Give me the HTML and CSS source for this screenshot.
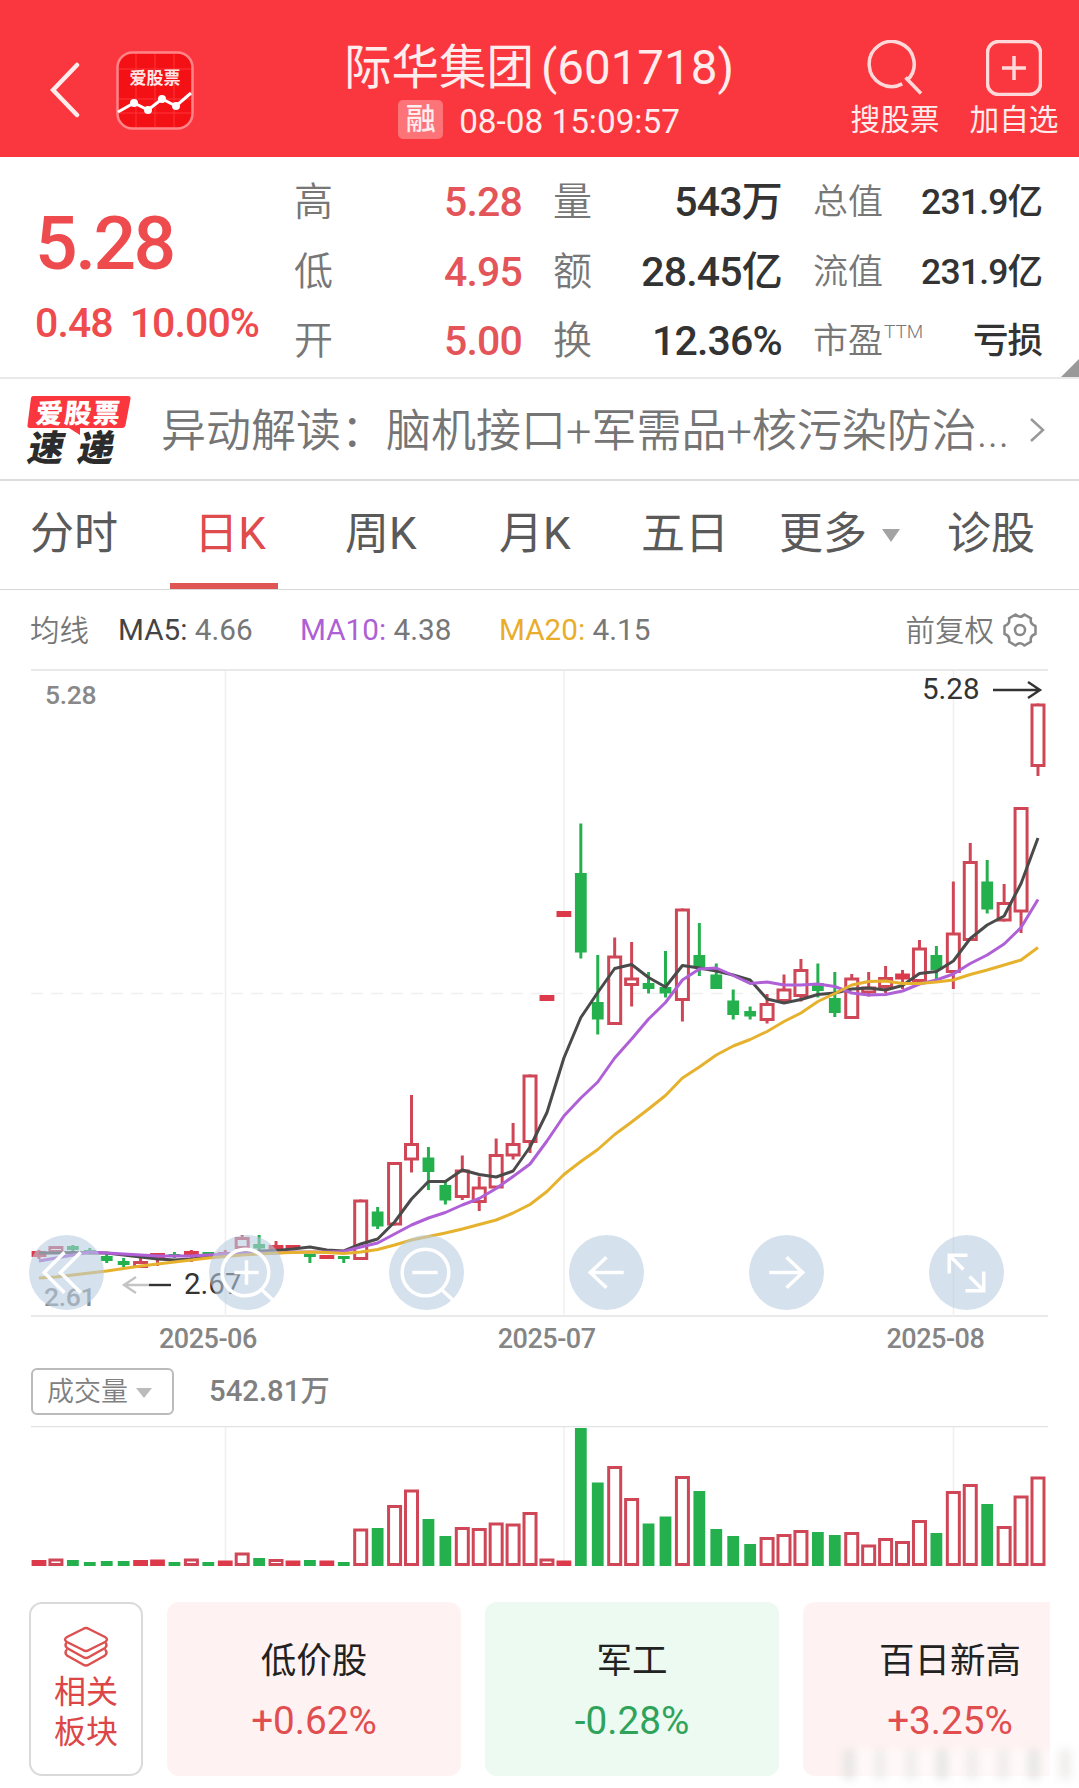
FILE: index.html
```html
<!DOCTYPE html>
<html lang="zh-CN">
<head>
<meta charset="utf-8">
<title>际华集团(601718)</title>
<link rel="stylesheet" href="styles.css">
</head>
<body>
<header class="topbar">
  <div class="topbar-left">
    <svg class="back" width="30" height="56" viewBox="0 0 30 56"><path d="M27 3 3 28l24 25"/></svg>
    <svg class="app-logo" width="78" height="79" viewBox="0 0 78 79">
      <rect class="logo-bg" x="1.5" y="1.5" width="75" height="76" rx="15"/>
      <path class="logo-grid" d="M20 3v73M39 3v73M58 3v73M3 18h72M3 48h72M3 62h72"/>
      <text x="39" y="32.500">爱股票</text>
      <path class="logo-line" d="M2 61 18 52 32 59 46 48 60 55 75 42"/>
      <g class="logo-dots"><circle cx="18" cy="52" r="4"/><circle cx="32" cy="59" r="4"/><circle cx="46" cy="48" r="4"/><circle cx="60" cy="55" r="4"/></g>
    </svg>
  </div>
  <div class="title-block">
    <h1>际华集团<span>(601718)</span></h1>
    <div class="subtitle"><span class="badge">融</span><time>08-08 15:09:57</time></div>
  </div>
  <nav class="actions">
    <div class="action">
      <svg width="58" height="56" viewBox="0 0 58 56"><path d="M36.200 43.900A22.500 22.500 0 1 1 41.500 40M39.500 37.500 55 53.500"/></svg>
      <span>搜股票</span>
    </div>
    <div class="action">
      <svg width="56" height="56" viewBox="0 0 56 56"><rect x="1.500" y="1.500" width="53" height="53" rx="11"/><path d="M28 16v24M16 28h24"/></svg>
      <span>加自选</span>
    </div>
  </nav>
</header>

<section class="quote">
  <div class="price-block">
    <strong>5.28</strong>
    <div class="change"><span>0.48</span><span>10.00%</span></div>
  </div>
  <dl class="stats col-a">
    <dt>高</dt><dd class="up">5.28</dd>
    <dt>低</dt><dd class="up">4.95</dd>
    <dt>开</dt><dd class="up">5.00</dd>
  </dl>
  <dl class="stats col-b">
    <dt>量</dt><dd>543万</dd>
    <dt>额</dt><dd>28.45亿</dd>
    <dt>换</dt><dd>12.36%</dd>
  </dl>
  <dl class="stats col-c">
    <dt>总值</dt><dd>231.9亿</dd>
    <dt>流值</dt><dd>231.9亿</dd>
    <dt>市盈<sup>TTM</sup></dt><dd>亏损</dd>
  </dl>
  <i class="corner"></i>
</section>

<section class="news">
  <svg class="news-logo" width="106" height="74" viewBox="0 -2 106 74">
    <path class="bubble" d="M7 1h95q3 0 2.500 3l-5 26q-.5 3-3.500 3H54v7l-11-7H4q-3 0-2.500-3L5 3q.5-2 2-2z"/>
    <text class="bubble-text" x="9" y="28" textLength="84" transform="skewX(-6) translate(3 0)">爱股票</text>
    <text class="bubble-sub" x="9" y="66" transform="skewX(-12) translate(5 0)">速</text>
    <text class="bubble-sub" x="59" y="66" transform="skewX(-12) translate(5 0)">递</text>
  </svg>
  <p>异动解读：脑机接口+军需品+核污染防治...</p>
  <svg class="chevron" width="18" height="28" viewBox="0 0 18 28"><path d="M3 3l12 11L3 25"/></svg>
</section>

<nav class="tabs">
  <span>分时</span><span class="active">日K</span><span>周K</span><span>月K</span><span>五日</span><span class="more">更多<i class="tri"></i></span><span>诊股</span>
</nav>

<section class="ma-row">
  <span class="ma-title">均线</span>
  <span class="ma ma5"><b>MA5:</b> 4.66</span>
  <span class="ma ma10"><b>MA10:</b> 4.38</span>
  <span class="ma ma20"><b>MA20:</b> 4.15</span>
  <span class="adjust"><span>前复权</span>
    <svg width="34" height="34" viewBox="-17 -17 34 34"><path d="M-4.500-15.500Q0-11 4.500-15.500L11-11.700Q9.500-6 15.500-4V4Q9.500 6 11 11.700L4.500 15.500Q0 11-4.500 15.500L-11 11.700Q-9.500 6-15.500 4V-4Q-9.500-6-11-11.700Z"/><circle r="5"/></svg>
  </span>
</section>

<section class="kline">
  <svg id="kline" width="1079" height="648" viewBox="0 668 1079 648"></svg>
  <div class="controls">
    <button><svg viewBox="-37 -37 74 74"><path d="M-2-20-22 0-2 20M14-20-6 0 14 20"/></svg></button>
    <button><svg viewBox="-37 -37 74 74"><circle cx="-1" r="23"/><path d="M15 17 28 29M-12 0h24M0-12v24"/></svg></button>
    <button><svg viewBox="-37 -37 74 74"><circle cx="-1" r="23"/><path d="M15 17 27 28M-14 0h25"/></svg></button>
    <button><svg viewBox="-37 -37 74 74"><path d="M17 0H-16M0-15-16 0 0 15"/></svg></button>
    <button><svg viewBox="-37 -37 74 74"><path d="M-17 0H16M0-15 16 0 0 15"/></svg></button>
    <button><svg viewBox="-37 -37 74 74"><path d="M1-17H-17V1M-17-17-3-3M-1 18H17V-1M17 18 3 4"/></svg></button>
  </div>
</section>

<div class="dates"><span>2025-06</span><span>2025-07</span><span>2025-08</span></div>

<div class="vol-head">
  <div class="select">成交量<i class="tri"></i></div>
  <span>542.81万</span>
</div>
<svg id="volume" width="1079" height="141" viewBox="0 1425 1079 141"></svg>

<section class="sectors">
  <div class="related">
    <svg width="46" height="44" viewBox="0 0 46 44"><path d="M20 3q3-2 6 0l16 8q4 2.500 0 5L26 24q-3 2-6 0L4 16q-4-2.500 0-5z"/><path d="M4 16q-3 3 0 6l16 9q3 2 6 0l16-9q3-3 0-6M4 23.500q-3 3 0 6l16 9q3 2 6 0l16-9q3-3 0-6"/></svg>
    <span>相关</span><span>板块</span>
  </div>
  <div class="cards">
    <article class="card rise"><h2>低价股</h2><p>+0.62%</p></article>
    <article class="card fall"><h2>军工</h2><p>-0.28%</p></article>
    <article class="card rise"><h2>百日新高</h2><p>+3.25%</p></article>
  </div>
  <div class="haze"><i></i><i></i><i></i><i></i><i></i><i></i><i></i><i></i></div>
</section>
<script src="chart.js"></script>
</body>
</html>
```
FILE: styles.css
```css
* { box-sizing: border-box; }
body {
  margin: 0;
  width: 1079px;
  height: 1788px;
  overflow: hidden;
  background: #fff;
  color: #333;
  font-family: Roboto, "Noto Sans CJK SC", sans-serif;
}
h1, h2, p, dl, dt, dd { margin: 0; font-weight: 400; }
svg { display: block; flex: none; }

.topbar {
  height: 157px;
  background: #fa373e;
  color: #ffecec;
  display: grid;
  grid-template-columns: 340px 398px 1fr;
}
.topbar-left { display: flex; align-items: flex-start; padding: 51px 0 0 50px; gap: 36px; }
.back { margin-top: 11px; fill: none; stroke: #ffecec; stroke-width: 4.500; stroke-linecap: round; }
.logo-bg { fill: #f31116; stroke: #ff8589; stroke-width: 2.500; }
.logo-grid { stroke: #ff3438; stroke-width: 1; }
.app-logo text { fill: #ffe6e6; font-size: 17px; font-weight: 700; text-anchor: middle; }
.logo-line { fill: none; stroke: #fff; stroke-width: 3; }
.logo-dots { fill: #fff; }
.title-block { padding-top: 37px; }
h1 { font-size: 47.500px; line-height: 62px; text-align: center; white-space: nowrap; }
h1 span { margin-left: 7px; }
.subtitle { display: flex; justify-content: center; align-items: center; gap: 16px; height: 39px; margin-top: 1px; }
.badge { width: 45px; height: 39px; border-radius: 5px; background: #fc7478; font-size: 30px; font-weight: 500; line-height: 38px; text-align: center; }
time { font-size: 33.300px; line-height: 44px; padding-top: 5px; }
.actions { display: flex; gap: 29px; padding: 40px 0 0 112px; }
.action { display: flex; flex-direction: column; align-items: center; width: 90px; font-size: 29.700px; line-height: 40px; }
.action svg { fill: none; stroke: #ffd9da; stroke-width: 3.500; }
.action span { margin-top: 4px; white-space: nowrap; }

.quote {
  position: relative;
  height: 222px;
  border-bottom: 2px solid #e9e9e9;
  display: flex;
}
.price-block { width: 294px; padding: 44px 0 0 35px; color: #ee4b4e; font-weight: 500; }
.price-block strong { display: block; font-size: 75px; line-height: 84px; font-weight: 500; letter-spacing: -2.500px; }
.change { display: flex; gap: 17px; margin-top: 13px; font-size: 41px; line-height: 50px; letter-spacing: -.9px; }
.stats { display: grid; grid-template-rows: repeat(3, 69.500px); padding-top: 11px; height: 220px; align-items: center; font-size: 41px; line-height: 69px; white-space: nowrap; }
.stats dt { color: #777; font-size: 39px; font-weight: 350; }
.stats dd { text-align: right; font-weight: 500; letter-spacing: -.8px; }
.stats .up { color: #e4555a; }
.col-a { width: 228px; grid-template-columns: 50px 1fr; }
.col-b { width: 229px; margin-left: 31px; grid-template-columns: 50px 1fr; }
.col-c { width: 227px; margin-left: 31px; grid-template-columns: 108px 1fr; font-size: 35.500px; }
.col-c dt { font-size: 35px; }
.stats sup { font-size: 19px; line-height: 0; vertical-align: 15px; margin-left: 1px; }
.corner { position: absolute; right: 0; bottom: 0; border: 9px solid; border-color: transparent #999 #999 transparent; }

.news { height: 102px; border-bottom: 2px solid #dcdcdc; display: flex; align-items: center; padding: 2px 33px 0 26px; }
.bubble { fill: #fa373e; }
.news-logo { overflow: visible; }
.news-logo text { font-weight: 900; }
.bubble-text { fill: #fff; font-size: 27px; }
.bubble-sub { fill: #2c2c2c; font-size: 36px; }
.news p { margin-left: 29px; padding-top: 3px; flex: 1; font-size: 45px; line-height: 60px; font-weight: 350; color: #757575; white-space: nowrap; }
.chevron { fill: none; stroke: #999; stroke-width: 2.500; }

.tabs {
  height: 109px;
  border-bottom: 1px solid #d8d8d8;
  display: grid;
  grid-template-columns: 140px 148px 174px 149px 138px 168px 1fr;
  padding-left: 30px;
  font-size: 44px;
  line-height: 106px;
  color: #5a5a5a;
}
.tabs > :nth-child(3) { padding-left: 27px; }
.tabs > :nth-child(4) { padding-left: 7px; }
.active { width: 108px; height: 108px; border-bottom: 6px solid #e05454; color: #e04b4b; text-align: center; padding-left: 12px; }
.tri { display: inline-block; border: 9px solid transparent; border-top: 13px solid #a3a3a3; border-bottom: 0; }
.more .tri { margin-left: 15px; vertical-align: 7px; }

.ma-row { height: 79px; display: flex; align-items: center; padding: 0 42px 0 30px; font-size: 29.700px; color: #777; }
.ma-title, .adjust { font-weight: 350; font-size: 29.500px; }
.ma-title, .adjust span { margin-top: -3px; }
.ma b { font-weight: 400; }
.ma5 { margin-left: 29px; width: 182px; }
.ma10 { width: 199px; }
.ma5 b { color: #444; }
.ma10 b { color: #ad60d6; }
.ma20 b { color: #e9ad2b; }
.adjust { margin-left: auto; display: flex; align-items: center; gap: 9px; }
.adjust svg { fill: none; stroke: #888; stroke-width: 2.500; stroke-linejoin: round; }

.kline { position: relative; height: 648px; }
.controls { position: absolute; left: 29px; right: 75px; bottom: 7px; display: flex; justify-content: space-between; }
.controls button { width: 75px; height: 75px; padding: 0; border: 0; border-radius: 50%; background: rgba(182, 203, 224, .58); }
.controls svg { width: 75px; height: 75px; fill: none; stroke: #fff; stroke-width: 3.500; }

.grid { stroke: #e2e2e2; stroke-width: 1.300; }
.month { stroke: #efefef; stroke-width: 1.500; }
.mid { stroke: #f0f0f0; stroke-width: 1.500; stroke-dasharray: 12 8; }
.rise-body { fill: #fff; stroke: #cf4656; stroke-width: 3; }
.rise-flat { fill: #dc3a4a; }
.rise-wick { stroke: #cf4656; stroke-width: 3; }
.fall-body { fill: #25b04e; }
.fall-wick { stroke: #25b04e; stroke-width: 3; }
.line { fill: none; stroke-width: 3; stroke-linejoin: round; }
.line5 { stroke: #4a4a4a; }
.line10 { stroke: #b060d6; }
.line20 { stroke: #e6b22e; }
.scale { fill: #888; font-size: 26.500px; font-weight: 500; letter-spacing: -.3px; }
.mark { fill: #333; font-size: 29.500px; }
.arrow { fill: none; stroke: #333; stroke-width: 2.400; }
.arrow-faint { fill: none; stroke: #c4c4c4; stroke-width: 2.400; }

.dates { display: flex; height: 51px; padding: 7px 0 0 159px; font-size: 27px; line-height: 31px; font-weight: 500; color: #858585; letter-spacing: -.5px; }
.dates span { width: 98px; margin-right: 241px; white-space: nowrap; }
.dates span:nth-child(2) { margin-right: 291px; }
.vol-head { display: flex; height: 58px; padding-left: 31px; font-size: 29.300px; font-weight: 500; color: #808080; }
.vol-head > span { margin-left: 35px; line-height: 46px; }
.select { width: 143px; height: 47px; border: 2px solid #bbb; border-radius: 6px; padding-left: 14px; font-size: 27px; font-weight: 350; line-height: 45px; white-space: nowrap; }
.select .tri { border-width: 10px 8px 0; border-top-color: #bbb; margin-left: 8px; vertical-align: 3px; }

.sectors { position: relative; display: flex; gap: 24px; padding: 35px 29px 0; }
.related { width: 114px; height: 174px; flex: none; border: 2px solid #dadada; border-radius: 13px; display: flex; flex-direction: column; align-items: center; padding-top: 22px; font-size: 32px; line-height: 40px; color: #dc4646; }
.related svg { fill: none; stroke: #dc5050; stroke-width: 2.400; margin-bottom: 2px; }
.cards { flex: 1; display: flex; gap: 24px; overflow: hidden; }
.card { flex: 0 0 294px; height: 174px; border-radius: 12px; text-align: center; padding-top: 33px; }
.card h2 { font-size: 35.500px; line-height: 52px; color: #222; }
.card p { font-size: 38.700px; line-height: 46px; margin-top: 11px; }
.rise { background: #fff2f2; }
.rise p { color: #e04e50; }
.fall { background: #ecfaf1; }
.fall p { color: #2fa35a; }
.haze { position: absolute; left: 843px; top: 182px; width: 228px; height: 30px; display: flex; justify-content: space-between; background: rgba(255, 255, 255, .55); filter: blur(4px); }
.haze i { width: 12px; background: #f1eded; }
.haze i:nth-child(3n + 1) { background: #e9e6e6; }
```
FILE: chart.js
```js
// One row per session: direction, body top, body bottom, wick top, wick bottom, volume bar top
const sessions = [
  ['r',1250,1256,1249,1258,1559],['r',1245,1252,1245,1252,1557.5],['g',1245,1249,1244,1251,1559],['g',1249,1252,1247,1253,1561],
  ['g',1255,1260,1253,1262,1560],['g',1260,1264,1257,1266,1560],['r',1260,1267,1257,1267,1559],['r',1252,1258,1252,1265,1558.5],
  ['g',1253,1256,1251,1257,1561],['r',1250,1256,1249,1261,1557.5],['g',1251,1254,1251,1254,1561],['r',1251,1255,1249,1256,1559.5],
  ['r',1236,1248,1234,1248,1551.5],['g',1243,1247.5,1234,1250,1557],['r',1244,1249,1240,1251,1558],['r',1244,1248,1244,1248,1559.5],
  ['g',1253,1256,1253,1262,1559],['r',1254,1258,1254,1258,1559.5],['g',1255,1258,1255,1262,1561],['r',1198.5,1259,1198.5,1259,1527.5],
  ['g',1210.5,1225.5,1206,1228,1527],['r',1161,1224.5,1161,1224.5,1504],['r',1142,1159.5,1094,1171.5,1488.5],['g',1156.5,1171,1146,1189,1518],
  ['g',1184,1199.5,1181,1203.5,1535],['r',1168.5,1197,1154.5,1199,1526],['r',1185.5,1202,1175.5,1210,1527],['r',1153,1187.5,1137.5,1187.5,1521.5],
  ['r',1142,1155.5,1122,1158.5,1522.5],['r',1073.5,1142,1073.5,1152,1511],['r',994,1000,994,1000,1557.5],['r',910,916,910,916,1559.5],
  ['g',872,951.5,822.5,957.5,1427],['g',1001,1018.5,954,1033.5,1481.5],['r',954.5,1024,936.5,1024,1465],['r',976.5,985,941,1005.5,1497],
  ['g',982,988,971,992.5,1522.5],['g',986,992.5,950,996.5,1515.5],['r',907.5,1000,907.5,1020.5,1475],['g',954,967,922,975,1490],
  ['g',973.5,988,962.5,988,1528],['g',999.5,1014,988.5,1018.5,1535],['g',1010,1015.5,1005.5,1018.5,1543],['r',1002,1020,993,1022.5,1536],
  ['r',987.5,1001,973.5,1001,1533],['r',968,996,958,1000.5,1529],['g',982,990,962.5,996.5,1531],['g',997,1012,971,1016,1534],
  ['r',976.5,1018,973,1018,1531],['r',985.5,992.5,971,995.5,1543.5],['r',976,987,965,992,1537],['r',972.5,978.5,969,988,1540],
  ['r',946.5,981,939,981,1519],['g',954,969,945,978,1532],['r',931.5,972,880.5,988,1490],['r',860,940,842,940,1483],
  ['g',880.5,908.5,859,912.5,1503],['r',901,920.5,883,920.5,1525],['r',806,911.5,806,932,1494.5],['r',702.5,766,702.5,775,1475.5]
];
const averages = {
  line5: [1252,1252,1251.5,1252,1252,1254,1256,1258,1259,1258,1256,1254,1252,1250,1249.5,1248,1246,1249,1250,1243,1238,1221,1198,1180.5,1180.5,1169,1173.5,1176,1170,1146,1111.5,1057,1016.5,991.5,967.5,963.5,976.5,986,964.5,967,970,974,979,998,1002,998.5,993.5,992,988,987,989,984.5,972.5,970.5,960,937.5,924,915,882.5,837],
  line10: [1260,1257,1254,1251,1252,1253,1254,1255,1255,1255,1254,1253,1252,1252,1252,1251,1251,1251,1250.5,1246,1242,1233,1224,1217,1211.5,1204,1197.5,1187.5,1175.5,1163,1140,1115,1097,1081,1057,1038,1018,1001.5,979,968,967,974.5,982.5,981,984,984,983,985.5,992,994,993.5,990,983,979,973,962.5,954,943,926.5,898.5],
  line20: [1277,1276,1274,1272,1270,1267.5,1265,1263,1261,1259,1257,1255.5,1254,1253,1252,1251.5,1251,1251.5,1252.5,1251,1248.5,1244,1239,1235.5,1232,1228,1223.5,1219,1212,1203.5,1190.5,1173.5,1160.5,1148.5,1133.5,1121,1108,1094.5,1077,1066,1054,1045,1038.5,1030.5,1020.5,1012,1000.5,992.5,984,980.5,980,982.5,982.5,981,979,973.5,969,964,959,946.5]
};
const baseLine = 1565;
const x = i => 39 + i * 16.932;
function bar(dir, i, top, bottom) {
  const h = bottom - top;
  if (dir === 'g') return `<rect class="fall-body" x="${x(i) - 5.9}" y="${top}" width="11.8" height="${h}"/>`;
  // Bodies too thin to hold an outline are drawn solid
  if (h <= 6.5) return `<rect class="rise-flat" x="${x(i) - 7.4}" y="${top}" width="14.8" height="${h}"/>`;
  return `<rect class="rise-body" x="${x(i) - 6}" y="${top + 1.5}" width="12" height="${h - 3}"/>`;
}
const months = (top, bottom) => [225.5, 564, 953.5].map(m => `<path class="month" d="M${m} ${top}V${bottom}"/>`).join('');

let k = '<path class="grid" d="M31 669H1048M31 1315H1048"/>' + months(670, 1315) + '<path class="mid" d="M31 992.5H1040"/>';
k += '<text class="scale" x="45" y="702.500">5.28</text><text class="scale" x="44" y="1305">2.61</text>';
sessions.forEach(([d, top, bottom, hi, lo], i) => {
  k += `<path class="${d === 'r' ? 'rise' : 'fall'}-wick" d="M${x(i)} ${hi}V${lo}"/>` + bar(d, i, top, bottom);
});
for (const name of ['line5', 'line10', 'line20']) {
  k += `<polyline class="line ${name}" points="${averages[name].map((y, i) => x(i) + ',' + y).join(' ')}"/>`;
}
k += '<text class="mark" x="922" y="698">5.28</text><path class="arrow" d="M993 689H1039M1028 681l12 8-12 8"/>';
k += '<text class="mark" x="184" y="1292.500">2.67</text><path class="arrow" d="M149 1284H171"/><path class="arrow-faint" d="M149 1284H124M136 1276l-12 8 12 8"/>';
document.getElementById('kline').innerHTML = k;

let v = '<path class="grid" d="M31 1425.700H1048"/>' + months(1426, 1565);
sessions.forEach(([d, , , , , top], i) => { v += bar(d, i, top, baseLine); });
document.getElementById('volume').innerHTML = v;
```
